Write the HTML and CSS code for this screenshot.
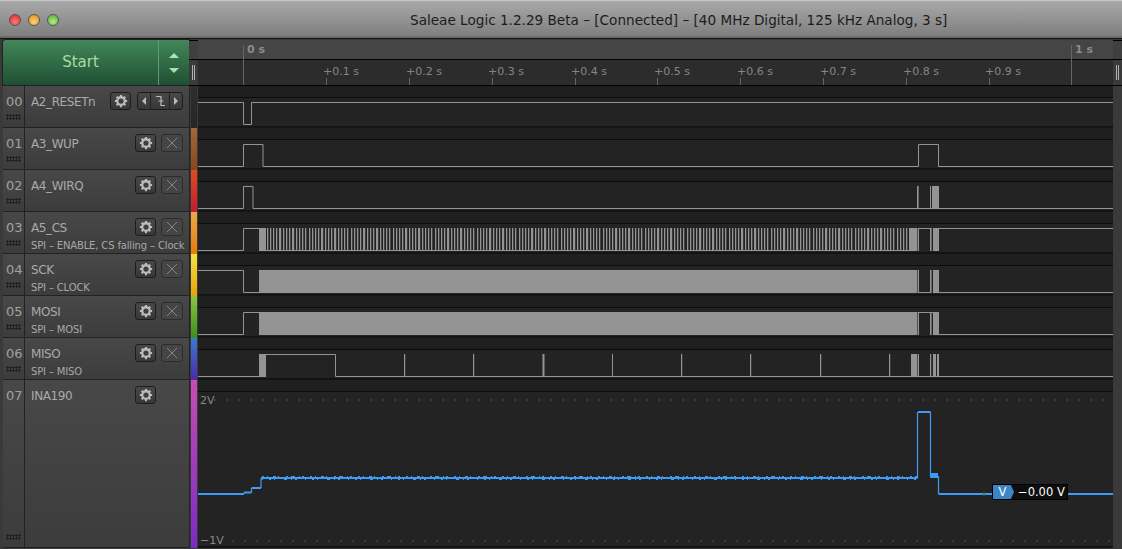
FILE: index.html
```html
<!DOCTYPE html>
<html lang="en">
<head>
    <meta charset="utf-8">
    <title>Saleae Logic</title>
    <link rel="stylesheet" href="styles.css">
</head>
<body>
<svg class="defs" width="0" height="0">
    <symbol id="gear" viewBox="0 0 16 16">
        <circle cx="8" cy="8" r="4.3" fill="none" stroke="currentColor" stroke-width="2.6"/>
        <path d="M6.8 1h2.4v3H6.8zM6.8 12h2.4v3H6.8zM1 6.8h3v2.4H1zM12 6.8h3v2.4h-3zM2.2 3.9l1.7-1.7 2.1 2.1-1.7 1.7zM10 11.7l1.7-1.7 2.1 2.1-1.7 1.7zM2.2 12.1l2.1-2.1 1.7 1.7-2.1 2.1zM10 4.3l2.1-2.1 1.7 1.7-2.1 2.1z" fill="currentColor"/>
    </symbol>
    <symbol id="cross" viewBox="0 0 12 12">
        <path d="M1 1l10 10M11 1L1 11" stroke="currentColor" stroke-width="0.9" fill="none"/>
    </symbol>
    <pattern id="clockBars" patternUnits="userSpaceOnUse" x="266" y="0" width="42" height="30">
        <rect x="1" width="1.3" height="30" fill="#949494"/>
        <rect x="4" width="1.3" height="30" fill="#949494"/>
        <rect x="7" width="1.3" height="30" fill="#949494"/>
        <rect x="10" width="1.3" height="30" fill="#949494"/>
        <rect x="13" width="2.2" height="30" fill="#949494"/>
        <rect x="17" width="1.3" height="30" fill="#949494"/>
        <rect x="20" width="1.3" height="30" fill="#949494"/>
        <rect x="23" width="1.3" height="30" fill="#949494"/>
        <rect x="26" width="2.2" height="30" fill="#949494"/>
        <rect x="30" width="1.3" height="30" fill="#949494"/>
        <rect x="33" width="1.3" height="30" fill="#949494"/>
        <rect x="36" width="1.3" height="30" fill="#949494"/>
        <rect x="39" width="1.3" height="30" fill="#949494"/>
    </pattern>
</svg>

<div class="titlebar">
    <div class="lights">
        <span class="light red"></span>
        <span class="light yellow"></span>
        <span class="light green"></span>
    </div>
    <div class="title">Saleae Logic 1.2.29 Beta – [Connected] – [40 MHz Digital, 125 kHz Analog, 3 s]</div>
</div>

<div class="top">
    <div class="startBtn">
        <div class="startLabel">Start</div>
        <div class="startArrows"><span class="arrowUp"></span><span class="arrowDown"></span></div>
    </div>
    <div class="stub"><div class="stubTop"></div><div class="stubBottom"><span class="grip"></span></div></div>
    <svg class="ruler" width="915" height="46" viewBox="198 40 915 46">
        <rect class="rulerTop" x="198" y="40" width="915" height="19"/>
        <rect class="rulerBottom" x="198" y="60" width="915" height="25"/>
        <path class="tick" d="M243.5 45V85M1071.5 45V85"/>
        <path class="tick" d="M326.5 78V85M409.5 78V85M492.5 78V85M575.5 78V85M657.5 78V85M740.5 78V85M823.5 78V85M906.5 78V85M989.5 78V85"/>
        <text class="major" x="247" y="53">0 s</text>
        <text class="major" x="1075" y="53">1 s</text>
        <text x="323" y="75">+0.1 s</text>
        <text x="406" y="75">+0.2 s</text>
        <text x="488" y="75">+0.3 s</text>
        <text x="571" y="75">+0.4 s</text>
        <text x="654" y="75">+0.5 s</text>
        <text x="737" y="75">+0.6 s</text>
        <text x="820" y="75">+0.7 s</text>
        <text x="903" y="75">+0.8 s</text>
        <text x="985" y="75">+0.9 s</text>
    </svg>
    <div class="stub stubRight"><div class="stubTop"></div><div class="stubBottom"><span class="grip"></span></div></div>
</div>

<div class="rows">
    <div class="row">
        <div class="num"><span>00</span><i class="dots"></i></div>
        <div class="info">
            <div class="head">
                <span class="name">A2_RESETn</span>
                <button class="btn"><svg class="gear"><use href="#gear"/></svg></button>
                <div class="trigger">
                    <span class="triggerArrow left"></span>
                    <span class="triggerEdge"><svg width="12" height="14" viewBox="0 0 12 14"><path d="M2 2.5H7V11.5H11M4.5 7H9.5" fill="none" stroke="currentColor" stroke-width="1.2"/></svg></span>
                    <span class="triggerArrow right"></span>
                </div>
            </div>
        </div>
        <div class="strip c0"></div>
        <div class="plot"><div class="band"></div>
            <svg class="wave" viewBox="198 0 915 28"><path d="M198 4.5H243.5V26.5H251.5V4.5H1113"/></svg>
        </div>
    </div>

    <div class="row">
        <div class="num"><span>01</span><i class="dots"></i></div>
        <div class="info">
            <div class="head">
                <span class="name">A3_WUP</span>
                <button class="btn"><svg class="gear"><use href="#gear"/></svg></button>
                <button class="btn btnX"><svg class="cross"><use href="#cross"/></svg></button>
            </div>
        </div>
        <div class="strip c1"></div>
        <div class="plot"><div class="band"></div>
            <svg class="wave" viewBox="198 0 915 28"><path d="M198 26.5H243.5V4.5H263V26.5H918.5V4.5H938.5V26.5H1113"/></svg>
        </div>
    </div>

    <div class="row">
        <div class="num"><span>02</span><i class="dots"></i></div>
        <div class="info">
            <div class="head">
                <span class="name">A4_WIRQ</span>
                <button class="btn"><svg class="gear"><use href="#gear"/></svg></button>
                <button class="btn btnX"><svg class="cross"><use href="#cross"/></svg></button>
            </div>
        </div>
        <div class="strip c2"></div>
        <div class="plot"><div class="band"></div>
            <svg class="wave" viewBox="198 0 915 28">
                <path d="M198 26.5H243.5V4.5H253V26.5H1113"/>
                <g class="bars"><rect x="917" y="4" width="1.6" height="23"/><rect x="930" y="4" width="1" height="23"/><rect x="932" y="4" width="7" height="23"/></g>
            </svg>
        </div>
    </div>

    <div class="row">
        <div class="num"><span>03</span><i class="dots"></i></div>
        <div class="info">
            <div class="head">
                <span class="name">A5_CS</span>
                <button class="btn"><svg class="gear"><use href="#gear"/></svg></button>
                <button class="btn btnX"><svg class="cross"><use href="#cross"/></svg></button>
            </div>
            <div class="sub">SPI – ENABLE, CS falling – Clock</div>
        </div>
        <div class="strip c3"></div>
        <div class="plot"><div class="band"></div>
            <svg class="wave" viewBox="198 0 915 28">
                <path d="M198 26.5H243.5V4.5H259M266 26.5H910M919 4.5H932M939 4.5H1113"/>
                <rect x="266" y="4" width="644" height="23" fill="url(#clockBars)"/>
                <g class="bars"><rect x="259" y="4" width="7" height="23"/><rect x="910" y="4" width="7" height="23"/><rect x="917.6" y="4" width="1.4" height="23"/><rect x="930" y="4" width="1.6" height="23"/><rect x="933" y="4" width="6" height="23"/></g>
            </svg>
        </div>
    </div>

    <div class="row">
        <div class="num"><span>04</span><i class="dots"></i></div>
        <div class="info">
            <div class="head">
                <span class="name">SCK</span>
                <button class="btn"><svg class="gear"><use href="#gear"/></svg></button>
                <button class="btn btnX"><svg class="cross"><use href="#cross"/></svg></button>
            </div>
            <div class="sub">SPI – CLOCK</div>
        </div>
        <div class="strip c4"></div>
        <div class="plot"><div class="band"></div>
            <svg class="wave" viewBox="198 0 915 28">
                <path d="M198 4.5H243.5V26.5H259M919 26.5H930M939 26.5H1113"/>
                <g class="bars"><rect x="259" y="4" width="658" height="23"/><rect x="917.6" y="4" width="1.4" height="23"/><rect x="930" y="4" width="1.6" height="23"/><rect x="933" y="4" width="6" height="23"/></g>
            </svg>
        </div>
    </div>

    <div class="row">
        <div class="num"><span>05</span><i class="dots"></i></div>
        <div class="info">
            <div class="head">
                <span class="name">MOSI</span>
                <button class="btn"><svg class="gear"><use href="#gear"/></svg></button>
                <button class="btn btnX"><svg class="cross"><use href="#cross"/></svg></button>
            </div>
            <div class="sub">SPI – MOSI</div>
        </div>
        <div class="strip c5"></div>
        <div class="plot"><div class="band"></div>
            <svg class="wave" viewBox="198 0 915 28">
                <path d="M198 26.5H243.5V4.5H259M919 4.5H933M939 26.5H1113"/>
                <g class="bars"><rect x="259" y="4" width="658" height="23"/><rect x="917.6" y="4" width="1.4" height="23"/><rect x="930" y="4" width="1.6" height="23"/><rect x="933" y="4" width="6" height="23"/></g>
            </svg>
        </div>
    </div>

    <div class="row">
        <div class="num"><span>06</span><i class="dots"></i></div>
        <div class="info">
            <div class="head">
                <span class="name">MISO</span>
                <button class="btn"><svg class="gear"><use href="#gear"/></svg></button>
                <button class="btn btnX"><svg class="cross"><use href="#cross"/></svg></button>
            </div>
            <div class="sub">SPI – MISO</div>
        </div>
        <div class="strip c6"></div>
        <div class="plot"><div class="band"></div>
            <svg class="wave" viewBox="198 0 915 28">
                <path d="M198 26.5H259M266 4.5H335.5V26.5H1113"/>
                <g class="bars">
                    <rect x="259" y="4" width="7" height="23"/>
                    <rect x="404" y="4" width="1.2" height="23"/><rect x="473" y="4" width="1.2" height="23"/><rect x="542.5" y="4" width="2" height="23"/>
                    <rect x="612" y="4" width="1" height="23"/><rect x="681" y="4" width="1.2" height="23"/><rect x="750" y="4" width="1.2" height="23"/><rect x="820" y="4" width="1.2" height="23"/>
                    <rect x="889" y="4" width="1.2" height="23"/><rect x="911" y="4" width="6" height="23"/><rect x="917.6" y="4" width="1.4" height="23"/>
                    <rect x="930" y="4" width="1.2" height="23"/><rect x="933" y="4" width="3" height="23"/><rect x="937" y="4" width="2" height="23"/>
                </g>
            </svg>
        </div>
    </div>

    <div class="row rowAnalog">
        <div class="num"><span>07</span><i class="dots"></i></div>
        <div class="info">
            <div class="head">
                <span class="name">INA190</span>
                <button class="btn btnLone"><svg class="gear"><use href="#gear"/></svg></button>
            </div>
        </div>
        <div class="strip c7"></div>
        <div class="plot"><div class="band"></div>
            <svg class="analog" viewBox="198 0 915 154">
                <path class="grid" d="M214 8H1113M232 149H1113"/>
                <text x="200" y="12">2V</text>
                <text x="200" y="152">−1V</text>
                <path class="signal" d="M198 102H244M244 100.5H251.5M251.5 96H261M261 86H917.5M918 20H930.5M938.5 102H1113"/>
                <path class="signalEdge" d="M244 102V100.5M251.5 100.5V96M261 96V86M917.5 86V20M930.5 20V84M938.5 84V102"/>
                <path class="signal noise" d="M262 84.5H917"/>
                <path class="signal noise noiseLow" d="M262 87.5H917"/>
                <rect class="signalBlock" x="930" y="81" width="8" height="5"/>
                <rect class="signalBlock" x="918" y="19" width="12" height="2"/>
                <rect x="983" y="100.5" width="2" height="3" fill="#1a8a4a"/>
            </svg>
            <div class="tag"><span class="tagName">V</span><span class="tagValue">−0.00 V</span></div>
        </div>
    </div>
</div>
</body>
</html>
```

FILE: styles.css
```css
* {
    margin: 0;
    padding: 0;
    box-sizing: border-box;
}

body {
    width: 1122px;
    height: 549px;
    overflow: hidden;
    display: flex;
    flex-direction: column;
    background-color: #3a3a3a;
    font-family: "DejaVu Sans", sans-serif;
}

.defs {
    position: absolute;
}

/* title bar */
.titlebar {
    height: 39px;
    flex: none;
    display: flex;
    align-items: center;
    background: linear-gradient(#a9a9a9, #7c7c7c);
    border-top: 1px solid #c8c8c8;
    border-bottom: 1px solid #111;
    box-shadow: inset 0 -2px 0 #6b6b6b;
}

.lights {
    width: 398px;
    flex: none;
    display: flex;
    gap: 7px;
    padding-left: 9px;
}

.light {
    width: 12px;
    height: 12px;
    border-radius: 50%;
    border: 1px solid #555;
}

.red {
    background: radial-gradient(circle at 50% 70%, #ff7a7a, #d8222c);
}

.yellow {
    background: radial-gradient(circle at 50% 70%, #ffd070, #e08a20);
}

.green {
    background: radial-gradient(circle at 50% 70%, #b0f080, #50a838);
}

.title {
    font-size: 13.6px;
    color: #1c1c1c;
    margin-left: 12px;
    white-space: nowrap;
}

/* start button and time ruler */
.top {
    height: 47px;
    flex: none;
    display: flex;
    padding-top: 1px;
    padding-left: 3px;
}

.startBtn {
    width: 186px;
    height: 45px;
    flex: none;
    display: flex;
    background: linear-gradient(#43875a, #1f4f33);
    border-radius: 3px 0 0 0;
    box-shadow: 0 0 0 1px #222;
}

.startLabel {
    flex: 1;
    text-align: center;
    line-height: 45px;
    font-size: 15px;
    color: #a6dca2;
    border-right: 1px solid #5f9c72;
}

.startArrows {
    width: 30px;
    display: flex;
    flex-direction: column;
    align-items: center;
    gap: 10px;
    padding-top: 13px;
}

.arrowUp,
.arrowDown {
    width: 0;
    height: 0;
    border-left: 5px solid transparent;
    border-right: 5px solid transparent;
}

.arrowUp {
    border-bottom: 5px solid #a9e3ae;
}

.arrowDown {
    border-top: 5px solid #a9e3ae;
}

.stub {
    width: 9px;
    flex: none;
    display: flex;
    flex-direction: column;
    height: 46px;
    margin-left: 0;
}

.stubRight {
    width: 9px;
}

.stubTop {
    height: 20px;
    background-color: #3f3f3f;
    border-bottom: 1px solid #000;
    border-top: 1px solid #000;
}

.stubBottom {
    flex: 1;
    display: flex;
    align-items: center;
    justify-content: center;
    background-color: #3a3a3a;
    border-bottom: 1px solid #000;
}

.grip {
    width: 3px;
    height: 15px;
    border-left: 1px solid #b0b0b0;
    border-right: 1px solid #b0b0b0;
}

.ruler {
    display: block;
    flex: none;
    background-color: #000;
}

.rulerTop {
    fill: #454545;
}

.rulerBottom {
    fill: #2c2c2c;
}

.tick {
    stroke: #666;
    stroke-width: 1;
    fill: none;
}

.ruler text {
    font-size: 11px;
    fill: #858585;
}

.ruler .major {
    font-weight: bold;
    fill: #8a8a8a;
}

/* channels */
.rows {
    flex: 1;
    display: flex;
    flex-direction: column;
    padding-left: 3px;
    padding-bottom: 1px;
}

.row {
    height: 42px;
    flex: none;
    display: flex;
}

.rowAnalog {
    height: 168px;
}

.num {
    width: 22px;
    flex: none;
    display: flex;
    flex-direction: column;
    padding: 8px 0 7px 3px;
    font-size: 13px;
    color: #a2a2a2;
    background: linear-gradient(#484848, #3c3c3c);
    border-bottom: 1px solid #222;
    border-right: 1px solid #222;
}

.dots {
    display: block;
    margin-top: auto;
    width: 15px;
    height: 6px;
    background-image: radial-gradient(#222 1px, transparent 1.2px);
    background-size: 3px 3px;
}

.info {
    width: 165px;
    flex: none;
    padding: 6px 6px 0 6px;
    background: linear-gradient(#484848, #3c3c3c);
    border-bottom: 1px solid #222;
    border-right: 1px solid #222;
}

.head {
    display: flex;
    align-items: flex-start;
    height: 18px;
    gap: 5px;
}

.name {
    font-size: 12px;
    line-height: 17px;
    letter-spacing: -0.4px;
    margin-top: 2px;
    color: #aaa;
    margin-right: auto;
}

.sub {
    margin-top: 3px;
    font-size: 10px;
    line-height: 14px;
    letter-spacing: -0.15px;
    color: #a8a8a8;
    white-space: nowrap;
}

.btn {
    width: 21px;
    height: 18px;
    flex: none;
    display: flex;
    align-items: center;
    justify-content: center;
    color: #bcbcbc;
    background: linear-gradient(#484848, #383838);
    border: 1px solid #1c1c1c;
    border-radius: 3px;
}

.btnX {
    width: 22px;
    color: #8c8c8c;
    background: #454545;
    border-color: #2c2c2c;
}

.btnLone {
    margin-right: 27px;
}

.gear {
    width: 14px;
    height: 14px;
}

.cross {
    width: 12px;
    height: 12px;
}

.trigger {
    width: 46px;
    height: 18px;
    flex: none;
    display: flex;
    margin-left: 1px;
    background: linear-gradient(#484848, #383838);
    border: 1px solid #1c1c1c;
    border-radius: 3px;
    color: #bcbcbc;
}

.triggerArrow {
    width: 12px;
    display: flex;
    align-items: center;
    justify-content: center;
}

.triggerArrow::before {
    content: "";
    border-top: 4px solid transparent;
    border-bottom: 4px solid transparent;
}

.left::before {
    border-right: 4px solid #bbb;
}

.right::before {
    border-left: 4px solid #bbb;
}

.triggerEdge {
    flex: 1;
    display: flex;
    align-items: center;
    justify-content: center;
    border-left: 1px solid #222;
    border-right: 1px solid #222;
}

.strip {
    width: 6px;
    flex: none;
    margin-left: 1px;
    margin-right: 1px;
}

.c0 { background: linear-gradient(#2e2e2e, #252525); }
.c1 { background: linear-gradient(#a5673a, #84481c); }
.c2 { background: linear-gradient(#e04c1c, #c41a30); }
.c3 { background: linear-gradient(#e8aa48, #e87c08); }
.c4 { background: linear-gradient(#f0e440, #e8a208); }
.c5 { background: linear-gradient(#8ac83c, #3c8c20); }
.c6 { background: linear-gradient(#3a7ad0, #4a2aa8); }
.c7 { background: linear-gradient(#c84cb0, #7a2ac8); }

.plot {
    width: 915px;
    flex: none;
    position: relative;
    display: flex;
    flex-direction: column;
    background-color: #232323;
    border-bottom: 2px solid #141414;
}

.band {
    height: 12px;
    flex: none;
    background-color: #1f1f1f;
    border-bottom: 1px solid #0c0c0c;
}

.wave,
.analog {
    display: block;
    width: 915px;
    flex: 1;
    min-height: 0;
}

.analog {
    overflow: visible;
}

.wave path {
    fill: none;
    stroke: #949494;
    stroke-width: 1;
}

.bars {
    fill: #949494;
}

.grid {
    fill: none;
    stroke: #555;
    stroke-width: 1;
    stroke-dasharray: 2 10;
}

.analog text {
    font-size: 11px;
    fill: #888;
}

.signal {
    fill: none;
    stroke: #3d9bf5;
    stroke-width: 2;
}

.signalEdge {
    fill: none;
    stroke: #3d9bf5;
    stroke-width: 1.2;
}

.noise {
    stroke-width: 1;
    stroke-dasharray: 2 3 1 5 3 2 1 7 2 3 4 4 1 2 2 6;
}

.noiseLow {
    stroke-dasharray: 1 6 2 3 1 9 3 4 1 3 2 8;
}

.signalBlock {
    fill: #3d9bf5;
}

/* value label on the analog trace */
.tag {
    position: absolute;
    left: 794px;
    top: 104px;
    height: 16px;
    display: flex;
    align-items: center;
    background-color: #0e0e0e;
    border: 1px solid #000;
    font-size: 11.5px;
    color: #fff;
}

.tagName {
    width: 21px;
    height: 14px;
    line-height: 14px;
    text-align: center;
    padding-right: 2px;
    background-color: #3c86c8;
    clip-path: polygon(0 0, 85% 0, 100% 50%, 85% 100%, 0 100%);
}

.tagValue {
    padding: 0 2px 0 4px;
    white-space: nowrap;
}
```
